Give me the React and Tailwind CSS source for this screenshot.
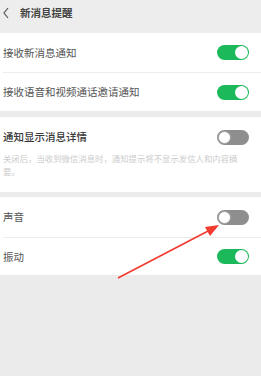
import React from 'react';

function Toggle({ on }) {
  return (
    <div
      className={`w-[32px] h-[15px] rounded-full flex items-center px-[1px] ${
        on ? 'bg-[#1cb95a] justify-end' : 'bg-[#8e8e8e] justify-start'
      }`}
    >
      <div
        className={`w-[13px] h-[13px] rounded-full bg-white ${on ? '' : 'border border-[#a0a0a0]'}`}
      />
    </div>
  );
}

function Row({ label, on, h = 'h-[39px]' }) {
  return (
    <div className={`${h} flex items-center justify-between pl-[3px] pr-[12px]`}>
      <span className="text-[10.5px] text-[#555]">{label}</span>
      <Toggle on={on} />
    </div>
  );
}

export default function App() {
  return (
    <div
      className="relative w-[261px] h-[376px] bg-[#ebebeb] overflow-hidden"
      style={{ fontFamily: '"Noto Sans CJK SC", "Noto Sans", sans-serif' }}
    >
      {/* header */}
      <div className="h-[33px] bg-[#ededed] flex items-start pt-[6px] pl-[3px]">
        <svg width="6" height="12" viewBox="0 0 6 12" className="mt-[1px]">
          <path d="M5 1 L1 6 L5 11" fill="none" stroke="#555" strokeWidth="1.2" />
        </svg>
        <span className="ml-[11px] text-[10.5px] font-bold text-[#444] leading-[14px]">新消息提醒</span>
      </div>

      <div className="bg-white">
        <Row label="接收新消息通知" on />
        <div className="ml-[3px] h-px bg-[#ececec]" />
        <Row label="接收语音和视频通话邀请通知" on h="h-[38px]" />
      </div>

      <div className="mt-[6px] bg-white h-[75px] pl-[3px] pr-[12px]">
        <div className="h-[40px] flex items-center justify-between">
          <span className="text-[10.5px] text-[#3a3a3a] font-medium">通知显示消息详情</span>
          <Toggle on={false} />
        </div>
        <p className="-mt-[5px] text-[8.4px] leading-[13px] text-[#cccccc] pr-[4px]">
          关闭后，当收到微信消息时，通知提示将不显示发信人和内容摘要。
        </p>
      </div>

      <div className="mt-[5px] bg-white">
        <Row label="声音" on={false} h="h-[40px]" />
        <div className="ml-[3px] h-px bg-[#ececec]" />
        <Row label="振动" on h="h-[37px]" />
      </div>

      {/* annotation arrow */}
      <svg className="absolute left-0 top-0" width="261" height="376" viewBox="0 0 261 376">
        <line x1="118" y1="278" x2="210" y2="230" stroke="#f23a2f" strokeWidth="1.6" />
        <polygon points="219,225 205,227 210,236" fill="#f23a2f" />
      </svg>
    </div>
  );
}
